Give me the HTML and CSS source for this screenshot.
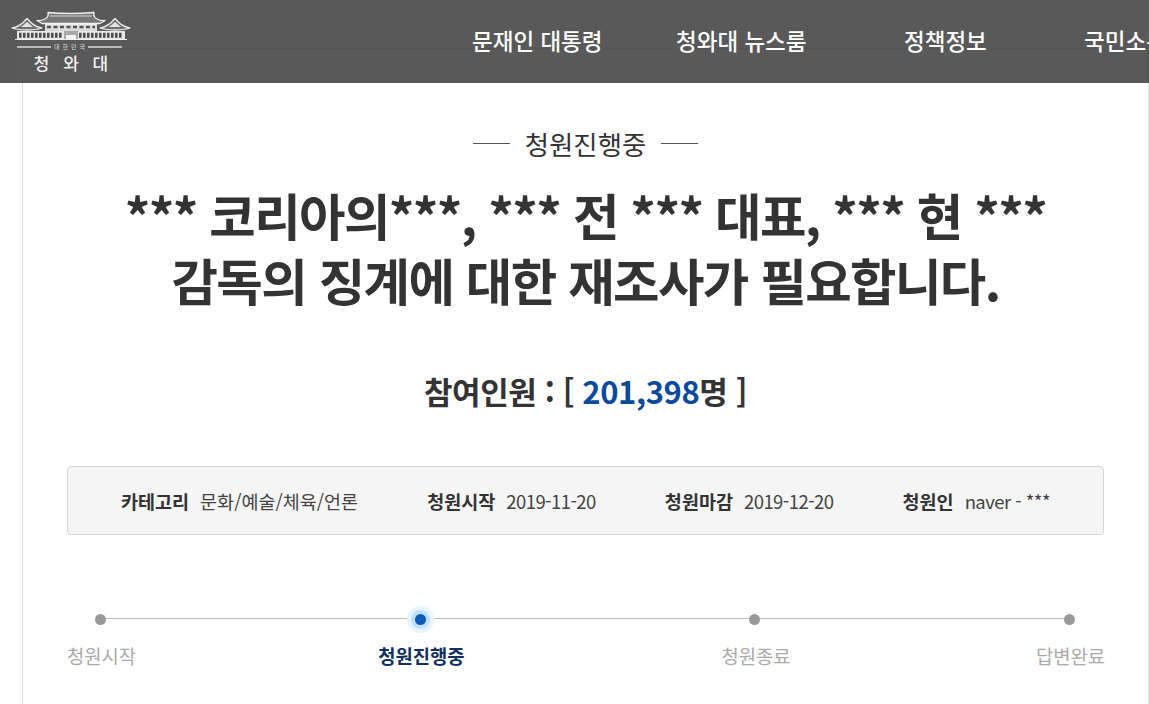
FILE: index.html
```html
<!DOCTYPE html>
<html lang="ko">
<head>
<meta charset="utf-8">
<title>청와대 국민청원</title>
<link rel="stylesheet" href="styles.css">
</head>
<body>
<header class="top">
  <a class="logo">
    <svg class="logo-mark" width="140" height="42" viewBox="0 0 140 42" aria-hidden="true">
      <!-- side pavilions -->
      <g fill="#6e6e6e" stroke="#e6e6e6" stroke-width="1.3" stroke-linejoin="round">
        <path d="M12 28 Q20 27 27 18.500 Q34 27 42 28 Q36 30 27 30 Q18 30 12 28Z"/>
        <path d="M100 28 Q108 27 115 18.500 Q122 27 130 28 Q124 30 115 30 Q106 30 100 28Z"/>
      </g>
      <path d="M21 27 L27 22 L33 27Z M109 27 L115 22 L121 27Z" fill="#e0e0e0"/>
      <!-- central hall -->
      <rect x="45" y="24" width="52" height="8" fill="#dcdcdc"/>
      <path d="M47 27 H95" fill="none" stroke="#555" stroke-width="2.400" stroke-dasharray="4 2.500"/>
      <!-- ground row -->
      <rect x="17" y="31" width="108" height="8.500" fill="#e8e8e8"/>
      <path d="M19 35.300 H63 M79 35.300 H123" fill="none" stroke="#4d4d4d" stroke-width="5" stroke-dasharray="2.600 1.400"/>
      <rect x="64" y="31" width="14" height="8.500" fill="#a8a8a8"/>
      <rect x="66" y="35" width="10" height="4.500" fill="#f2f2f2"/>
      <path d="M15 39.500 H127" stroke="#f0f0f0" stroke-width="1"/>
      <!-- main roof -->
      <path d="M48 12.500 Q70 14.500 94 12.500 Q93 17 97 19 Q101 21 105 20.500 L100 23.500 H42 L37 20.500 Q41 21 45 19 Q49 17 48 12.500Z" fill="#777" stroke="#f0f0f0" stroke-width="1.300" stroke-linejoin="round"/>
      <path d="M50 16 H92" stroke="#d8d8d8" stroke-width="1"/>
      <path d="M45 24 H97" stroke="#f0f0f0" stroke-width="1.500"/>
    </svg>
    <span class="logo-sub"><i class="logo-rule"></i><span class="logo-nation">대한민국</span><i class="logo-rule"></i></span>
    <span class="logo-name">청 와 대</span>
  </a>
  <nav class="nav">
    <a class="nav-item nav-one">문재인 대통령</a>
    <a class="nav-item nav-two">청와대 뉴스룸</a>
    <a class="nav-item nav-three">정책정보</a>
    <a class="nav-item nav-four">국민소통</a>
  </nav>
</header>

<main class="card">
  <p class="state"><i class="state-rule"></i><span>청원진행중</span><i class="state-rule"></i></p>
  <h1 class="title">*** 코리아의***, *** 전 *** 대표, *** 현 ***<br>감독의 징계에 대한 재조사가 필요합니다.</h1>
  <h2 class="count">참여인원 : [ <span class="count-num">201,398</span>명 ]</h2>
  <ul class="info">
    <li class="info-item"><b>카테고리</b><span>문화/예술/체육/언론</span></li>
    <li class="info-item"><b>청원시작</b><span class="info-latin">2019-11-20</span></li>
    <li class="info-item"><b>청원마감</b><span class="info-latin">2019-12-20</span></li>
    <li class="info-item"><b>청원인</b><span class="info-latin">naver - ***</span></li>
  </ul>
  <ol class="steps">
    <li class="step step-start"><i class="dot"></i><span>청원시작</span></li>
    <li class="step step-active"><i class="dot"></i><span>청원진행중</span></li>
    <li class="step step-mid"><i class="dot"></i><span>청원종료</span></li>
    <li class="step step-end"><i class="dot"></i><span>답변완료</span></li>
  </ol>
</main>
</body>
</html>
```
FILE: styles.css
```css
* { box-sizing: border-box; }
html, body { margin: 0; padding: 0; height: 704px; overflow: hidden; background: #fff; }
body {
  font-family: "Noto Sans CJK KR", "Noto Sans", sans-serif;
  color: #333;
}
i { font-style: normal; display: block; }
ul, ol { list-style: none; margin: 0; padding: 0; }

.top {
  position: absolute;
  left: 0; top: 0;
  width: 100%;
  height: 83px;
  background: rgba(60, 60, 60, .85);
  z-index: 2;
  overflow: hidden;
}
.logo {
  position: absolute;
  left: -1px; top: 0;
  width: 141px;
  display: flex;
  flex-direction: column;
  align-items: center;
  color: #eee;
}
.logo-mark { display: block; }
.logo-sub {
  display: flex;
  align-items: center;
  gap: 3px;
  height: 10px;
  font-size: 6px;
  line-height: 10px;
  color: #ddd;
}
.logo-rule { width: 34px; height: 1.5px; background: #bbb; }
.logo-nation { letter-spacing: 3px; margin-right: -3px; }
.logo-name {
  font-size: 17px;
  line-height: 17px;
  margin: 2px 0 0 3px;
  word-spacing: 9px;
  font-weight: 500;
  color: #f0f0f0;
}
.nav {
  position: absolute;
  left: 472px; top: 0;
  height: 83px;
  display: flex;
  white-space: nowrap;
}
.nav-item {
  font-size: 22.5px;
  font-weight: 500;
  line-height: 81px;
  color: #fff;
}
.nav-one { width: 204px; }
.nav-two { width: 228px; }
.nav-three { width: 180px; }

.card {
  position: absolute;
  left: 22px; top: 48px;
  width: 1127px;
  height: 656px;
  border-left: 1px solid #ddd;
  border-right: 1px solid #ddd;
  border-top: 1px solid #ddd;
  padding: 0 44px;
}
.state {
  margin: 78px 0 0;
  height: 33px;
  display: flex;
  justify-content: center;
  align-items: center;
  gap: 15px;
  font-size: 26.4px;
  line-height: 33px;
  color: #333;
}
.state-rule { width: 37px; height: 1px; background: #555; }
.title {
  margin: 22px 0 0;
  text-align: center;
  font-size: 50.5px;
  letter-spacing: -1.58px;
  line-height: 65px;
  font-weight: 700;
  color: #333;
}
.count {
  margin: 57px 0 0;
  text-align: center;
  font-size: 31px;
  letter-spacing: -.4px;
  line-height: 44px;
  font-weight: 700;
  color: #333;
}
.count-num { color: #0b4a9a; }
.info {
  margin-top: 53px;
  height: 69px;
  display: flex;
  align-items: center;
  justify-content: space-between;
  padding: 0 53px;
  border: 1px solid #d5d5d5;
  border-radius: 4px;
  background: #f5f5f5;
  font-size: 18.5px;
}
.info-item { display: flex; gap: 11px; white-space: nowrap; color: #444; }
.info-item b { font-weight: 700; color: #333; }
.info-latin { letter-spacing: -.55px; }
.steps {
  position: relative;
  margin-top: 73px;
  display: flex;
}
.steps::before {
  content: "";
  position: absolute;
  left: 33px; right: 35px; top: 10px;
  height: 1px;
  background: #bbb;
}
.step {
  position: relative;
  display: flex;
  flex-direction: column;
  align-items: center;
  font-size: 18.8px;
  line-height: 26px;
  color: #aaa;
}
.step .dot {
  width: 11px; height: 11px;
  margin: 6px 3px 18px 0;
  border-radius: 50%;
  background: #999;
}
.step-active { margin-left: 242px; color: #12305e; font-weight: 700; }
.step-active .dot {
  margin-right: 2px;
  background: #0b5cb8;
  box-shadow: 0 0 0 4px #bfe0ff, 0 0 0 8px #e8f4ff;
}
.step-mid { margin-left: 257px; }
.step-end { margin-left: auto; margin-right: -1px; }
.step-end .dot { margin-right: 1px; }
```
